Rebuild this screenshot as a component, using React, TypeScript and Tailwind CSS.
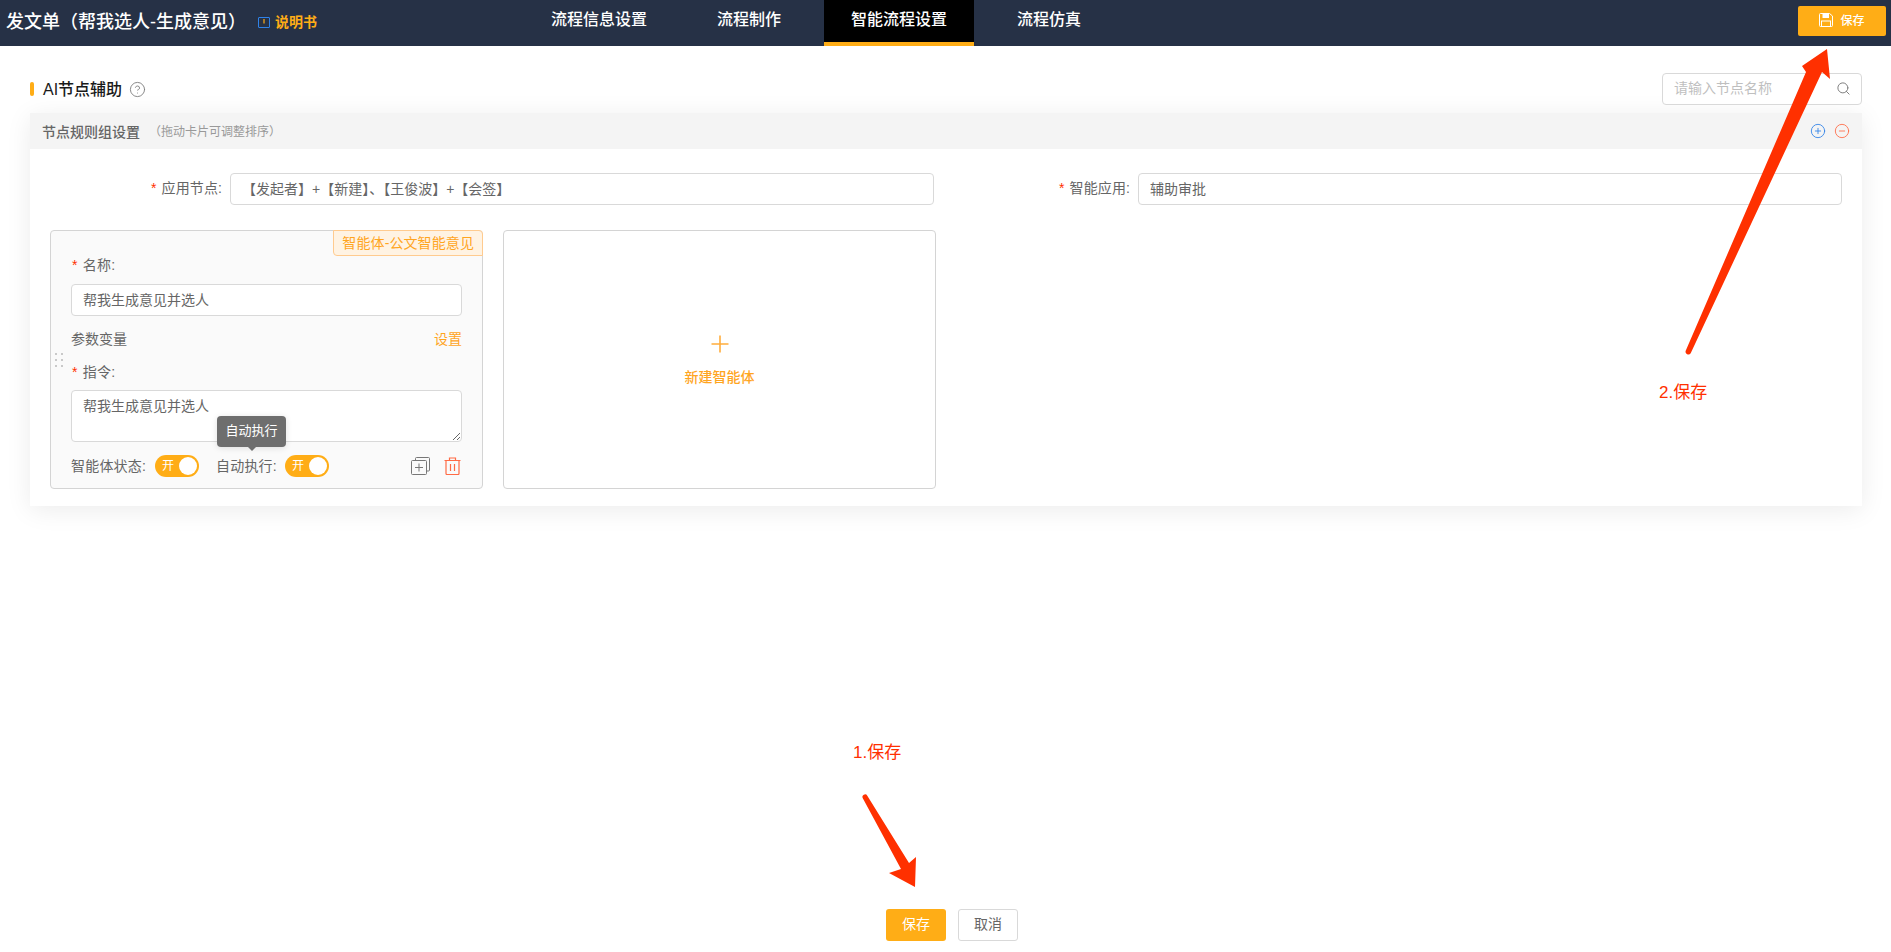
import React from "react";
import { CircleHelp, CircleMinus, CirclePlus, Search } from "lucide-react";

const FONT = "[font-family:'Liberation_Sans','Noto_Sans_CJK_SC',sans-serif]";

function Star() {
  return <span className="mr-[5px] text-[14px] text-[#ff3000]">*</span>;
}

function Toggle() {
  return (
    <div className="flex h-[22px] w-[44px] items-center justify-between rounded-full bg-[#ffad16] pl-[7px] pr-[2px]">
      <span className="text-[12px] leading-none text-white">开</span>
      <span className="h-[18px] w-[18px] rounded-full bg-white" />
    </div>
  );
}

function Tab({ label, active }: { label: string; active?: boolean }) {
  return (
    <div
      className={
        "flex h-[46px] items-center border-b-4 px-[27px] pb-[2px] text-[16px] font-medium text-white " +
        (active ? "border-[#ffad16] bg-black" : "border-transparent")
      }
    >
      {label}
    </div>
  );
}

const inputCls =
  "h-[32px] w-full rounded-[4px] border border-[#d9d9d9] bg-white px-[11px] pb-[2px] text-[14px] text-[#666666] outline-none";

function FormRow({ label, value }: { label: string; value: string }) {
  return (
    <div className="flex items-center">
      <label className="flex w-[172px] shrink-0 items-center justify-end pb-[2px] text-[14px] tracking-[0.1px] text-[#666666]">
        <Star />
        {label}
      </label>
      <input readOnly value={value} className={inputCls + " ml-[8px]"} />
    </div>
  );
}

function FieldLabel({ label }: { label: string }) {
  return (
    <div className="flex h-[20px] items-center text-[14px] tracking-[0.3px] text-[#666666]">
      <span className="ml-[1px]">
        <Star />
      </span>
      {label}
    </div>
  );
}

function AgentCard() {
  return (
    <div className="relative h-[259px] w-[433px] rounded-[4px] border border-[#d4d4d4] bg-[#fafafa] px-[20px] pt-[24px]">
      <div className="absolute -right-px -top-px flex h-[26px] items-center rounded-tr-[4px] rounded-bl-[4px] border border-[#ffcb8f] bg-[#fff3e3] px-[8px] text-[14px] tracking-[0.1px] text-[#ffa51f]">
        智能体-公文智能意见
      </div>
      <svg className="absolute left-[4px] top-[122px]" width="9" height="14" viewBox="0 0 9 14" fill="#c9c9c9">
        <rect x="0" y="0" width="2" height="2" />
        <rect x="6" y="0" width="2" height="2" />
        <rect x="0" y="6" width="2" height="2" />
        <rect x="6" y="6" width="2" height="2" />
        <rect x="0" y="12" width="2" height="2" />
        <rect x="6" y="12" width="2" height="2" />
      </svg>
      <FieldLabel label="名称:" />
      <input readOnly value="帮我生成意见并选人" className={inputCls + " mt-[9px] block"} />
      <div className="mt-[13px] flex h-[20px] items-center justify-between text-[14px] text-[#666666]">
        <span>参数变量</span>
        <span className="text-[#ffa51f]">设置</span>
      </div>
      <div className="mt-[13px]">
        <FieldLabel label="指令:" />
      </div>
      <textarea
        readOnly
        value="帮我生成意见并选人"
        className="mt-[8px] block h-[52px] w-full rounded-[4px] border border-[#d9d9d9] bg-white px-[11px] py-[4px] text-[14px] leading-[22px] text-[#666666] outline-none"
      />
      <div className="mt-[13px] flex h-[22px] items-center text-[14px] text-[#666666]">
        <span className="w-[84px] tracking-[0.2px]">智能体状态:</span>
        <Toggle />
        <span className="ml-[17px] w-[69px] tracking-[0.2px]">自动执行:</span>
        <Toggle />
        <svg className="ml-[82px]" width="19" height="18" viewBox="0 0 19 18" fill="none" stroke="#777777" strokeWidth="1">
          <path d="M4.5 3V1.5a1 1 0 0 1 1-1h12a1 1 0 0 1 1 1V13a1 1 0 0 1-1 1H16" />
          <rect x="0.5" y="3.5" width="15" height="14" rx="1" />
          <path d="M4 10.5h8M8 6.5v8" />
        </svg>
        <svg className="ml-[14px]" width="17" height="18" viewBox="0 0 17 18" fill="none" stroke="#ff6b45" strokeWidth="1.2">
          <path d="M0.5 3.5h16M5.5 3.5V1h6v2.5" />
          <path d="M2 3.5V16.5a1 1 0 0 0 1 1h11a1 1 0 0 0 1-1V3.5" />
          <path d="M6.5 7v7M10.5 7v7" />
        </svg>
      </div>
      <div className="absolute left-[166px] top-[185px] flex h-[31px] w-[69px] items-center justify-center rounded-[4px] bg-[#6e6e6e] pb-[1px] text-[13px] text-white shadow-[0_1px_6px_rgba(0,0,0,0.12)]">
        自动执行
        <span className="absolute -bottom-[4px] left-1/2 h-0 w-0 -translate-x-1/2 border-x-[4px] border-t-[4px] border-x-transparent border-t-[#6e6e6e]" />
      </div>
    </div>
  );
}

function NewCard() {
  return (
    <div className="flex h-[259px] w-[433px] flex-col items-center rounded-[4px] border border-[#d4d4d4] bg-white pt-[104px]">
      <svg width="18" height="18" viewBox="0 0 18 18" fill="none" stroke="#ffad3d" strokeWidth="1.6">
        <path d="M0.5 9h17M9 0.5v17" />
      </svg>
      <span className="mt-[14px] text-[14px] font-medium leading-[20px] text-[#ffa51f]">新建智能体</span>
    </div>
  );
}

export default function App() {
  return (
    <div className={"relative flex h-[952px] flex-col overflow-hidden bg-white " + FONT}>
      <header className="flex h-[46px] shrink-0 items-center bg-[#263146]">
        <div className="flex w-[524px] items-center pb-[1px] pl-[6px]">
          <span className="w-[252px] text-[18px] font-medium text-white">发文单（帮我选人-生成意见）</span>
          <svg width="12" height="13" viewBox="0 0 12 13" fill="none" stroke="#2f82e8" strokeWidth="1">
            <rect x="0.5" y="1.5" width="11" height="10" rx="0.5" />
            <path d="M6 3v4.5" stroke="#ffad16" strokeWidth="1.2" />
          </svg>
          <span className="ml-[5px] text-[14px] font-bold text-[#ffad16]">说明书</span>
        </div>
        <nav className="flex gap-[16px]">
          <Tab label="流程信息设置" />
          <Tab label="流程制作" />
          <Tab label="智能流程设置" active />
          <Tab label="流程仿真" />
        </nav>
        <button className="mb-[4px] ml-auto mr-[5px] flex h-[30px] w-[88px] items-center justify-center gap-[7px] rounded-[2px] bg-[#ffad16] text-[12px] font-medium text-white">
          <svg className="mb-[3px]" width="14" height="14" viewBox="0 0 14 14" fill="none" stroke="#ffffff" strokeWidth="1">
            <path d="M1.5 0.5h9l3 2.5v9.5a1 1 0 0 1-1 1h-11a1 1 0 0 1-1-1v-11a1 1 0 0 1 1-1z" />
            <rect x="4" y="0.5" width="5.5" height="4" fill="#ffffff" />
            <rect x="2.5" y="8" width="9" height="5.5" />
          </svg>
          保存
        </button>
      </header>

      <main className="flex-1 pl-[30px] pr-[29px] pt-[27px]">
        <div className="flex h-[32px] items-center justify-between">
          <div className="flex items-center">
            <span className="h-[14px] w-[4px] rounded-[2px] bg-[#ffad16]" />
            <span className="ml-[9px] pt-[2px] text-[16px] font-medium text-[#1a1a1a]">AI节点辅助</span>
            <CircleHelp className="ml-[7px] h-[17px] w-[17px] text-[#808080]" strokeWidth={1.3} />
          </div>
          <div className="relative w-[200px]">
            <input readOnly placeholder="请输入节点名称" className={inputCls + " placeholder:text-[#bfbfbf]"} />
            <Search className="absolute right-[11px] top-[8px] h-[15px] w-[15px] text-[#808080]" strokeWidth={1.6} />
          </div>
        </div>

        <section className="mt-[8px] bg-white shadow-[0_4px_24px_rgba(0,0,0,0.08)]">
          <div className="flex h-[36px] items-center bg-[#f4f4f4] pl-[12px] pr-[12px]">
            <span className="pt-[2px] text-[14px] font-medium text-[#666666]">节点规则组设置</span>
            <span className="ml-[9px] pt-[1px] text-[12px] text-[#999999]">（拖动卡片可调整排序）</span>
            <CirclePlus className="ml-auto h-[16px] w-[16px] text-[#2f82e8]" strokeWidth={1.3} />
            <CircleMinus className="ml-[8px] h-[16px] w-[16px] text-[#ff6b45]" strokeWidth={1.3} />
          </div>
          <div className="px-[20px] pb-[17px] pt-[24px]">
            <div className="grid grid-cols-2 gap-[24px]">
              <FormRow label="应用节点:" value="【发起者】+【新建】、【王俊波】+【会签】" />
              <FormRow label="智能应用:" value="辅助审批" />
            </div>
            <div className="mt-[25px] flex gap-[20px]">
              <AgentCard />
              <NewCard />
            </div>
          </div>
        </section>
      </main>

      <footer className="flex shrink-0 justify-center gap-[12px] pb-[11px] pl-[13px]">
        <button className="h-[32px] w-[60px] rounded-[3px] bg-[#ffad16] pb-[1px] text-[14px] text-white">保存</button>
        <button className="h-[32px] w-[60px] rounded-[3px] border border-[#d9d9d9] bg-white pb-[1px] text-[14px] text-[#666666]">取消</button>
      </footer>

      <span className="absolute left-[853px] top-[741px] text-[17px] leading-[24px] text-[#ff3000]">1.保存</span>
      <span className="absolute left-[1659px] top-[381px] text-[17px] leading-[24px] text-[#ff3000]">2.保存</span>
      <svg className="absolute left-0 top-0 h-[952px] w-[1891px]" viewBox="0 0 1891 952" fill="#ff3000" pointerEvents="none">
        <path d="M862.8 798.3a2.6 2.6 0 0 1 4.5-2.6L909 863 916 857 915 887 889 873 901 869z" />
        <path d="M1690.7 353.2a2.8 2.8 0 0 1-5-2.4L1806 72 1802 66 1827 49 1830 79 1822 72z" />
      </svg>
    </div>
  );
}
